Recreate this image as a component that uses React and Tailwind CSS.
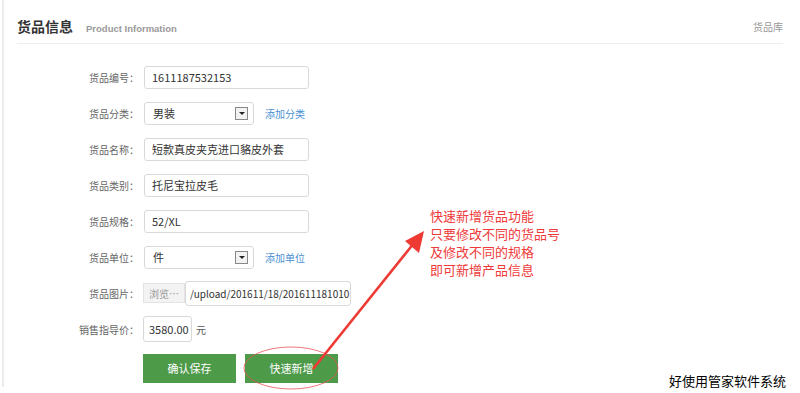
import React from 'react'

const font = { fontFamily: '"Noto Sans CJK SC", "Liberation Sans", sans-serif' }

function Label({ children }) {
  return (
    <div className="w-[139px] shrink-0 text-right text-[10px] text-[#666]">
      {children}
    </div>
  )
}

function TextInput({ value, className = 'w-[165px]' }) {
  return (
    <div
      className={`${className} h-[23px] rounded-[3px] border border-[#d9d9d9] bg-white pl-[7px] text-[11px] leading-[21px] text-[#333] overflow-hidden whitespace-nowrap`}
    >
      {value}
    </div>
  )
}

function Select({ value, link }) {
  return (
    <>
      <div className="flex h-[23px] w-[110px] items-center justify-between rounded-[3px] border border-[#d9d9d9] bg-white pl-[8px] pr-[5px] text-[11px] text-[#333]">
        <span>{value}</span>
        <span className="flex h-[13px] w-[13px] items-center justify-center border border-[#888] bg-[#f2f2f2]">
          <span className="h-0 w-0 border-x-[3px] border-t-[3px] border-x-transparent border-t-[#222]" />
        </span>
      </div>
      <a href="#" className="ml-[11px] text-[10px] text-[#4a8fd3]">
        {link}
      </a>
    </>
  )
}

function Row({ label, children }) {
  return (
    <div className="flex h-[36px] items-center">
      <Label>{label}</Label>
      <div className="ml-[5px] flex items-center">{children}</div>
    </div>
  )
}

export default function App() {
  return (
    <div
      style={font}
      className="relative h-[393px] w-[800px] overflow-hidden bg-white"
    >
      <div className="absolute left-[2px] top-0 h-[387px] w-[2px] bg-[#ececec]" />

      <header className="mx-[17px] flex h-[44px] items-center justify-between border-b border-[#eeeeee] pt-[10px]">
        <div className="flex items-baseline">
          <h1 className="text-[14px] font-bold text-[#333]">货品信息</h1>
          <span className="ml-[13px] font-['Liberation_Sans',sans-serif] text-[9.5px] font-bold text-[#999]">
            Product Information
          </span>
        </div>
        <span className="text-[10px] text-[#999]">货品库</span>
      </header>

      <div className="mt-[15px]">
        <Row label="货品编号：">
          <TextInput value="1611187532153" />
        </Row>
        <Row label="货品分类：">
          <Select value="男装" link="添加分类" />
        </Row>
        <Row label="货品名称：">
          <TextInput value="短款真皮夹克进口貉皮外套" />
        </Row>
        <Row label="货品类别：">
          <TextInput value="托尼宝拉皮毛" />
        </Row>
        <Row label="货品规格：">
          <TextInput value="52/XL" />
        </Row>
        <Row label="货品单位：">
          <Select value="件" link="添加单位" />
        </Row>
        <Row label="货品图片：">
          <div className="-ml-[1px] flex h-[20px] w-[42px] items-center justify-center border border-[#e3e3e3] bg-[#f3f3f3] text-[10px] text-[#999]">
            浏览…
          </div>
          <div className="h-[25px] w-[166px] rounded-[3px] border border-[#d9d9d9] bg-white pl-[4px] text-[10px] leading-[23px] text-[#333] overflow-hidden whitespace-nowrap">
            /upload/201611/18/201611181010
          </div>
        </Row>
        <div className="flex h-[36px] items-center">
          <Label>销售指导价：</Label>
          <div className="ml-[4px] flex items-center">
            <div className="h-[26px] w-[49px] rounded-[3px] border border-[#d9d9d9] bg-white pl-[5px] text-[11px] leading-[24px] text-[#333]">
              3580.00
            </div>
            <span className="ml-[4px] text-[10px] text-[#555]">元</span>
          </div>
        </div>

        <div className="ml-[143px] mt-[7px] flex gap-[9px]">
          <button className="h-[29px] w-[93px] bg-[#4d9a49] text-[11px] text-white">
            确认保存
          </button>
          <button className="h-[29px] w-[93px] bg-[#4d9a49] text-[11px] text-white">
            快速新增
          </button>
        </div>
      </div>

      <svg
        className="absolute left-0 top-0"
        width="800"
        height="393"
        viewBox="0 0 800 393"
      >
        <ellipse
          cx="291"
          cy="368"
          rx="47"
          ry="21"
          fill="none"
          stroke="#e8545a"
          strokeWidth="0.8"
        />
        <line
          x1="313"
          y1="369"
          x2="414"
          y2="243"
          stroke="#ee3a33"
          strokeWidth="2.6"
        />
        <polygon points="424,231 419,253 405,241" fill="#ee3a33" />
      </svg>

      <div className="absolute left-[430px] top-[207px] text-[13px] leading-[18px] text-[#ee3a3a]">
        <div>快速新增货品功能</div>
        <div>只要修改不同的货品号</div>
        <div>及修改不同的规格</div>
        <div>即可新增产品信息</div>
      </div>

      <div className="absolute left-[669px] top-[371px] text-[13px] text-black">
        好使用管家软件系统
      </div>
    </div>
  )
}
